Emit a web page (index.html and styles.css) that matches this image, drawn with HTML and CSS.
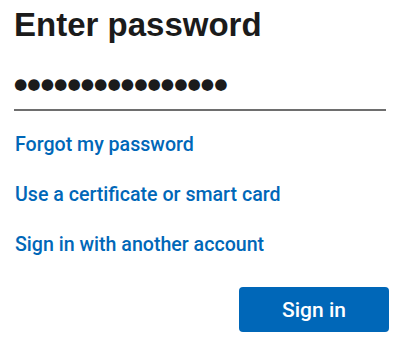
FILE: index.html
```html
<!DOCTYPE html>
<html>
<head>
<meta charset="utf-8">
<link rel="stylesheet" href="styles.css">
</head>
<body>
<div class="page">
  <h1 class="title">Enter password</h1>
  <div class="field"><span class="dots">●●●●●●●●●●●●●●●●</span></div>
  <div class="links">
    <a class="link" href="#">Forgot my password</a>
    <a class="link" href="#">Use a certificate or smart card</a>
    <a class="link" href="#">Sign in with another account</a>
  </div>
  <div class="actions">
    <button class="btn">Sign in</button>
  </div>
</div>
</body>
</html>
```
FILE: styles.css
```css
html, body {
  margin: 0;
  padding: 0;
  background: #ffffff;
}
.page {
  font-family: "Liberation Sans", Arial, sans-serif;
  padding: 6px 16px 0 14px;
  width: 375px;
}
.title {
  margin: 0;
  font-size: 33px;
  font-weight: bold;
  color: #1b1b1b;
  line-height: 38px;
}
.field {
  margin-top: 26px;
  margin-right: 3px;
  height: 41px;
  border-bottom: 2px solid #6e6e6e;
  box-sizing: border-box;
  padding-left: 0;
  padding-top: 4px;
}
.dots {
  font-family: "DejaVu Sans", sans-serif;
  font-size: 15.3px;
  letter-spacing: 0;
  color: #1b1b1b;
  line-height: 20px;
}
.links {
  display: flex;
  flex-direction: column;
  align-items: flex-start;
  gap: 26px;
  margin-top: 22px;
  padding-left: 1px;
}
.link {
  font-family: Roboto, "Liberation Sans", sans-serif;
  font-weight: 500;
  color: #0067b8;
  text-decoration: none;
  font-size: 19.6px;
  line-height: 24px;
}
.actions {
  display: flex;
  justify-content: flex-end;
  margin-top: 30px;
}
.btn {
  width: 150px;
  height: 45px;
  border: none;
  border-radius: 4px;
  background: #0067b8;
  color: #ffffff;
  font-family: Roboto, "Liberation Sans", sans-serif;
  font-weight: 500;
  font-size: 21px;
  margin-right: 0;
}
```
